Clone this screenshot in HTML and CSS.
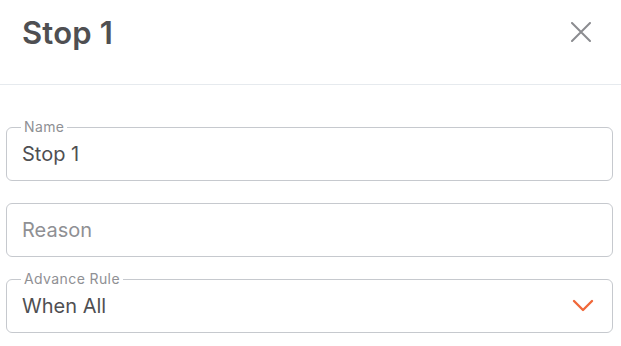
FILE: index.html
```html
<!DOCTYPE html>
<html lang="en">
<head>
  <meta charset="UTF-8">
  <title>Stop 1</title>
  <link rel="stylesheet" href="styles.css">
</head>
<body>
  <div class="dialog">
    <div class="dialog-header">
      <h1>Stop 1</h1>
      <button class="close-button" aria-label="Close">
        <svg width="20" height="20" viewBox="0 0 20 20">
          <path d="M1 1 L19 19 M19 1 L1 19" stroke="#8b8c90" stroke-width="2" stroke-linecap="round" fill="none"/>
        </svg>
      </button>
    </div>
    <div class="dialog-body">
      <div class="field">
        <span class="field-label">Name</span>
        <div class="field-value">Stop 1</div>
      </div>
      <div class="field">
        <div class="field-value placeholder">Reason</div>
      </div>
      <div class="field select">
        <span class="field-label">Advance Rule</span>
        <div class="field-value">When All</div>
        <svg class="chevron" width="22" height="14" viewBox="0 0 22 14">
          <path d="M2 2 L11 11 L20 2" stroke="#f0683a" stroke-width="2.4" stroke-linecap="round" stroke-linejoin="round" fill="none"/>
        </svg>
      </div>
    </div>
  </div>
</body>
</html>
```

FILE: styles.css
```css
body {
  margin: 0;
  background: #fff;
  font-family: Inter, "Liberation Sans", sans-serif;
  color: #4f4f52;
}
.dialog-header {
  height: 85px;
  border-bottom: 1px solid #e6eaee;
  display: flex;
  align-items: center;
  justify-content: space-between;
  padding: 0 30px 0 22px;
  box-sizing: border-box;
}
.dialog-header h1 {
  margin: 0 0 20px;
  font-size: 31px;
  font-weight: 600;
  letter-spacing: 0.2px;
  color: #4f4f52;
}
.close-button {
  border: none;
  background: none;
  padding: 0;
  margin-bottom: 20px;
  display: flex;
  cursor: pointer;
}
.dialog-body {
  padding: 42px 8px 0 6px;
  display: flex;
  flex-direction: column;
  gap: 22px;
}
.field {
  position: relative;
  height: 54px;
  border: 1px solid #c6c9ce;
  border-radius: 6px;
  box-sizing: border-box;
  display: flex;
  align-items: center;
  padding: 0 15px;
}
.field-label {
  position: absolute;
  top: -10px;
  left: 14px;
  padding: 0 3px;
  background: #fff;
  font-size: 14px;
  letter-spacing: 0.4px;
  color: #8f9094;
}
.field-value {
  font-size: 20px;
  color: #4f4f52;
}
.field-value.placeholder {
  color: #8f9094;
}
.select {
  justify-content: space-between;
}
.chevron {
  margin-right: 3px;
}
```
